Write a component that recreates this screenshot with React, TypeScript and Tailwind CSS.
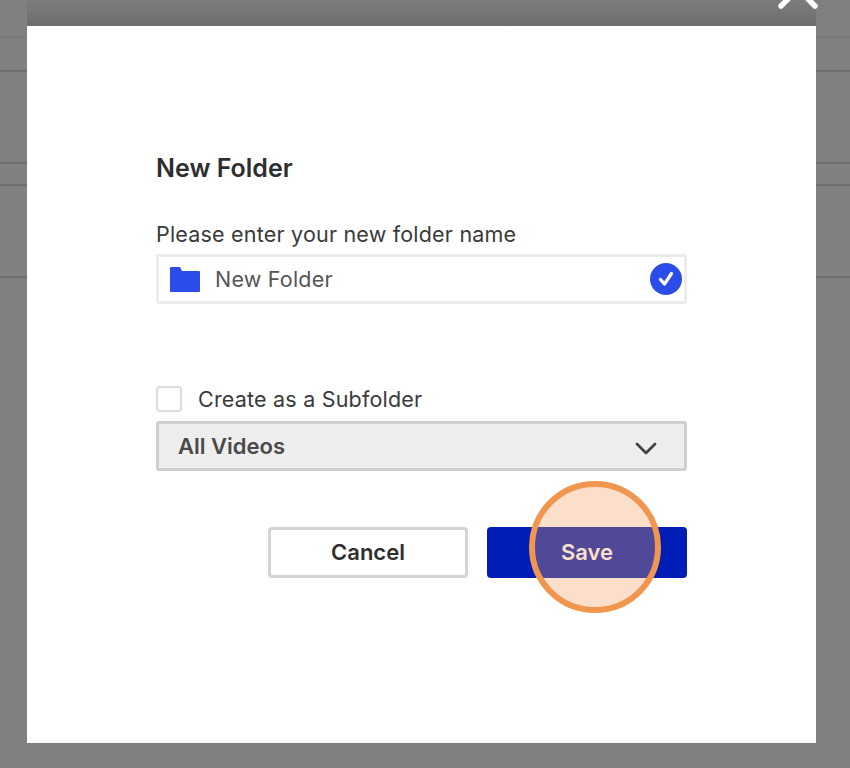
import React from 'react';

const rowHeights = ['h-[38px]', 'h-[34px]', 'h-[92px]', 'h-[22px]', 'h-[92px]'];

const App: React.FC = () => {
  return (
    <div className="relative h-[768px] w-[850px] overflow-hidden bg-[#808080] font-['Inter',sans-serif]">
      {/* Dimmed page behind the dialog */}
      <div className="flex flex-col">
        {rowHeights.map((h, idx) => (
          <div key={idx} className={`${h} border-b-2 ${idx === 0 ? 'border-[#787878]' : 'border-[#6e6e6e]'}`} />
        ))}
      </div>

      <div className="absolute left-[27px] top-0 h-[26px] w-[789px] bg-gradient-to-b from-[#7d7d7d] to-[#6c6c6c]" />

      {/* Close */}
      <svg className="absolute left-[776px] top-[-14px]" width="44" height="24" viewBox="0 0 44 24" fill="none">
        <path d="M5 20 L22 3 L39 20" stroke="#fff" strokeWidth="5.5" strokeLinecap="round" />
      </svg>

      {/* Dialog */}
      <div className="absolute left-[27px] top-[26px] flex h-[717px] w-[789px] flex-col bg-white pl-[129px] pt-[126px]">
        <div className="flex w-[531px] flex-col">
          <h2 className="text-[25px] font-semibold leading-[32px] text-[#2e2e2e]">New Folder</h2>

          <label className="mt-[34px] text-[21.5px] leading-[32px] tracking-[0.2px] text-[#3a3a3a]">
            Please enter your new folder name
          </label>
          <div className="mt-[4px] flex h-[50px] items-center rounded-[3px] border-[3px] border-[#ececec] pl-[11px] pr-[2px]">
            <svg width="30" height="25" viewBox="0 0 30 25">
              <path d="M0 1a1 1 0 0 1 1-1h9l2 4h17a1 1 0 0 1 1 1v19a1 1 0 0 1-1 1H1a1 1 0 0 1-1-1z" fill="#2b4ce8" />
            </svg>
            <span className="ml-[15px] text-[21.5px] tracking-[0.2px] text-[#555]">New Folder</span>
            <svg className="ml-auto" width="32" height="32" viewBox="0 0 32 32">
              <circle cx="16" cy="16" r="16" fill="#2b4ce8" />
              <path d="M10.5 16.5 L14.5 21 L21.5 10.5" fill="none" stroke="#fff" strokeWidth="3.2" strokeLinecap="round" strokeLinejoin="round" />
            </svg>
          </div>

          <div className="mt-[79px] flex h-[32px] items-center">
            <div className="h-[26px] w-[26px] rounded-[4px] border-2 border-[#dcdcdc]" />
            <span className="ml-[16px] text-[21.5px] tracking-[0.2px] text-[#3a3a3a]">Create as a Subfolder</span>
          </div>
          <div className="mt-[6px] flex h-[50px] items-center justify-between rounded-[3px] border-[3px] border-[#cfcfcf] bg-[#eeeeee] pl-[19px] pr-[27px]">
            <span className="text-[22px] font-semibold text-[#4a4a4a]">All Videos</span>
            <svg className="mt-[5px]" width="22" height="13" viewBox="0 0 22 13" fill="none">
              <path d="M2 2 L11 11 L20 2" stroke="#444" strokeWidth="2.8" strokeLinecap="round" strokeLinejoin="round" />
            </svg>
          </div>

          <div className="mt-[56px] flex justify-end gap-[19px]">
            <button className="h-[51px] w-[200px] rounded-[4px] border-[3px] border-[#d4d4d4] bg-white text-[22px] font-semibold text-[#2e2e2e]">
              Cancel
            </button>
            <button className="h-[51px] w-[200px] rounded-[4px] bg-[#001eb5] text-[22px] font-semibold text-white">
              Save
            </button>
          </div>
        </div>
      </div>

      {/* Click highlight */}
      <div className="absolute left-[529px] top-[481px] h-[132px] w-[132px] rounded-full border-[6px] border-[#f0964f] bg-[#f39d5f]/[0.33]" />
    </div>
  );
};

export default App;
